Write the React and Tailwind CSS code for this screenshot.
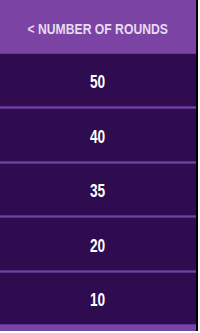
export default function App() {
  const rows = [
    { v: "50", h: "h-[52px]" },
    { v: "40", h: "h-[52px]" },
    { v: "35", h: "h-[51px]" },
    { v: "20", h: "h-[52px]" },
    { v: "10", h: "h-[51px]" },
  ];
  return (
    <div className="w-[200px] h-[333px] bg-white flex" style={{ fontFamily: '"Liberation Sans", Arial, sans-serif' }}>
      <div className="w-[198px] h-[331px] flex flex-col border-r-2 border-black bg-[#2f0b4f]">
        <div className="h-[54px] bg-[#7b44a4] flex items-center justify-center pt-[6px] border-b border-[#6a389a]">
          <span className="text-[14px] font-bold text-[#e6dcf0] scale-x-[0.87] whitespace-nowrap">
            &lt; NUMBER OF ROUNDS
          </span>
        </div>
        {rows.map((r, i) => (
          <div key={r.v} className="flex flex-col">
            <div className={`${r.h} flex items-center justify-center pt-[4px]`}>
              <span className="text-[19px] font-bold text-white scale-x-[0.72]">{r.v}</span>
            </div>
            {i < rows.length - 1 ? (
              <div className="h-[3px] bg-[#7242a6] border-y border-[#5a2d88]" />
            ) : (
              <div className="h-[7px] bg-[#7845a6] border-t border-[#5e3090]" />
            )}
          </div>
        ))}
      </div>
    </div>
  );
}
